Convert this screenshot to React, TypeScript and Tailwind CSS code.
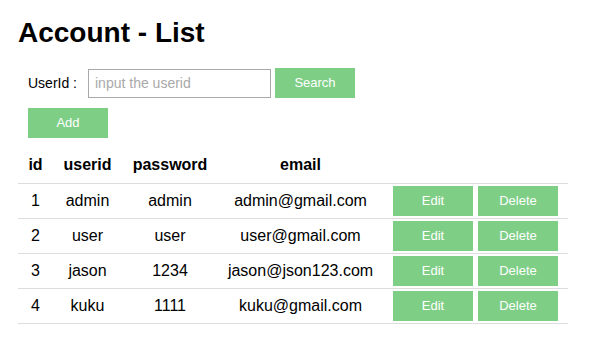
const ACCOUNTS = [
  { id: 1, userid: "admin", password: "admin", email: "admin@gmail.com" },
  { id: 2, userid: "user", password: "user", email: "user@gmail.com" },
  { id: 3, userid: "jason", password: "1234", email: "jason@json123.com" },
  { id: 4, userid: "kuku", password: "1111", email: "kuku@gmail.com" },
];

const btn =
  "h-[30px] w-[80px] bg-[#7ece86] text-[13px] text-white flex items-center justify-center";

export default function App() {
  return (
    <div className="min-h-[348px] w-[596px] bg-white px-[18px] pt-[17px] font-['Liberation_Sans',Arial,sans-serif] text-black">
      <h1 className="text-[28px] font-bold leading-[32px]">Account - List</h1>

      <div className="mt-[19px] flex items-center pl-[10px]">
        <span className="w-[55px] text-[14px]">UserId :</span>
        <input
          placeholder="input the userid"
          className="ml-[5px] h-[29px] w-[183px] border border-[#a9a9a9] px-[6px] text-[14px] outline-none placeholder:text-[#a9a9a9]"
        />
        <button className={`${btn} ml-[4px]`}>Search</button>
      </div>

      <div className="mt-[10px] pl-[10px]">
        <button className={btn}>Add</button>
      </div>

      <table className="mt-[10px] w-[550px] border-collapse text-[16px]">
        <thead>
          <tr className="h-[35px] border-b border-[#dddddd] font-bold">
            <th className="w-[35px] text-center">id</th>
            <th className="w-[69px] text-center">userid</th>
            <th className="w-[96px] text-center">password</th>
            <th className="w-[165px] text-center">email</th>
            <th></th>
          </tr>
        </thead>
        <tbody>
          {ACCOUNTS.map((a) => (
            <tr key={a.id} className="h-[35px] border-b border-[#dddddd]">
              <td className="text-center">{a.id}</td>
              <td className="text-center">{a.userid}</td>
              <td className="text-center">{a.password}</td>
              <td className="text-center">{a.email}</td>
              <td className="pl-[10px]">
                <div className="flex gap-[5px]">
                  <button className={btn}>Edit</button>
                  <button className={btn}>Delete</button>
                </div>
              </td>
            </tr>
          ))}
        </tbody>
      </table>
    </div>
  );
}
